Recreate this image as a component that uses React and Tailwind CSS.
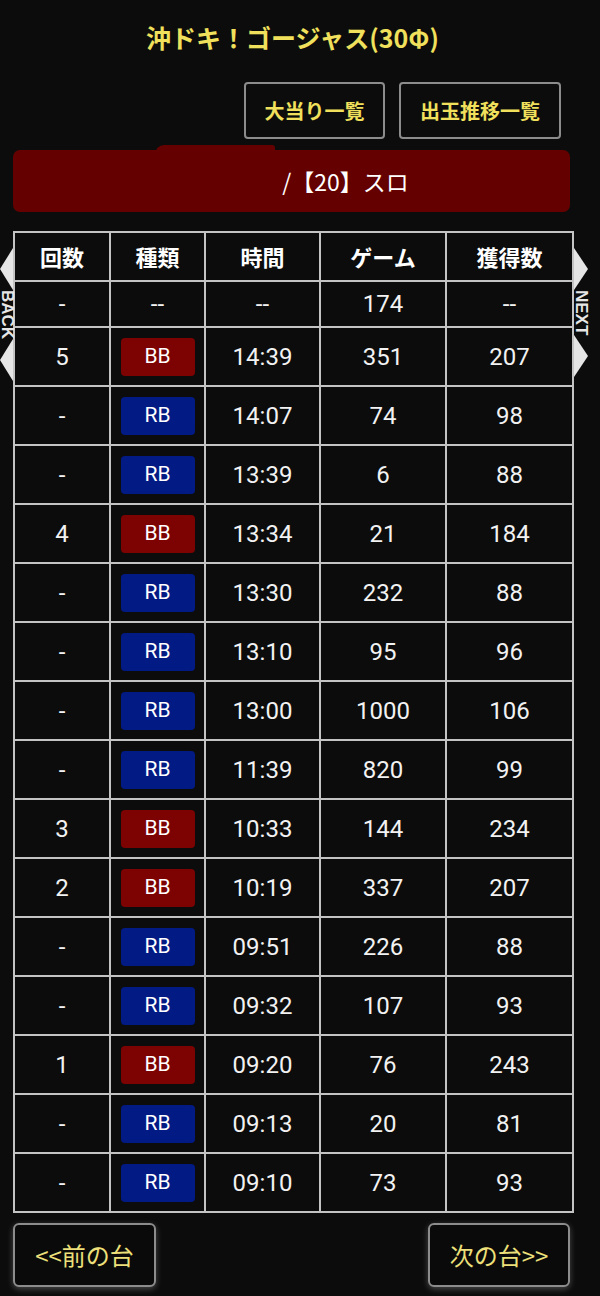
import React from "react"

const rows = [
  ["5", "BB", "14:39", "351", "207"],
  ["-", "RB", "14:07", "74", "98"],
  ["-", "RB", "13:39", "6", "88"],
  ["4", "BB", "13:34", "21", "184"],
  ["-", "RB", "13:30", "232", "88"],
  ["-", "RB", "13:10", "95", "96"],
  ["-", "RB", "13:00", "1000", "106"],
  ["-", "RB", "11:39", "820", "99"],
  ["3", "BB", "10:33", "144", "234"],
  ["2", "BB", "10:19", "337", "207"],
  ["-", "RB", "09:51", "226", "88"],
  ["-", "RB", "09:32", "107", "93"],
  ["1", "BB", "09:20", "76", "243"],
  ["-", "RB", "09:13", "20", "81"],
  ["-", "RB", "09:10", "73", "93"],
]

function Badge({ kind }) {
  const bg = kind === "BB" ? "bg-[#7d0303]" : "bg-[#021a84]"
  return (
    <div className={`mx-auto flex h-[38px] w-[74px] items-center justify-center rounded-[4px] text-[21px] text-white ${bg}`}>
      {kind}
    </div>
  )
}

function SideNav({ side }) {
  const left = side === "left"
  const tri = left ? "13,0 13,42 0,21" : "0,0 0,42 14,21"
  return (
    <div className={`absolute top-[248px] flex w-[14px] flex-col items-center ${left ? "left-0" : "left-[574px]"}`}>
      <svg width="14" height="42" viewBox="0 0 14 42">
        <polygon points={tri} fill="#e6e6e6" />
      </svg>
      <div className="my-[4px] font-['Liberation_Sans',sans-serif] text-[17px] font-bold leading-[14px] text-[#e6e6e6] [writing-mode:vertical-rl]">
        {left ? "BACK" : "NEXT"}
      </div>
      <svg width="14" height="42" viewBox="0 0 14 42">
        <polygon points={tri} fill="#e6e6e6" />
      </svg>
    </div>
  )
}

export default function App() {
  return (
    <div className="relative min-h-[1296px] w-[600px] bg-[#0c0c0c] font-['Roboto','Noto_Sans_CJK_JP',sans-serif] text-white">
      <SideNav side="left" />
      <SideNav side="right" />
      <div className="pl-[13px] pr-[28px]">
        <h1 className="pt-[22px] text-center font-['Noto_Sans_CJK_JP',sans-serif] text-[25px] font-bold leading-[30px] text-[#f0e05c]">
          沖ドキ！ゴージャス(30Φ)
        </h1>
        <div className="mt-[30px] flex justify-end gap-[14px] pr-[11px]">
          <button className="h-[57px] w-[141px] rounded-[4px] border-2 border-[#8c8c8c] font-['Noto_Sans_CJK_JP',sans-serif] text-[20px] font-bold text-[#f0e05c]">
            大当り一覧
          </button>
          <button className="h-[57px] w-[162px] rounded-[4px] border-2 border-[#8c8c8c] font-['Noto_Sans_CJK_JP',sans-serif] text-[20px] font-bold text-[#f0e05c]">
            出玉推移一覧
          </button>
        </div>
        <div className="relative mr-[2px] mt-[11px] flex h-[62px] items-center justify-center rounded-[7px] bg-[#650000] text-[23px]">
          <div className="absolute left-[142px] top-[-5px] h-[9px] w-[120px] rounded-tl-[12px] rounded-tr-[4px] bg-[#650000]" />
          <span className="w-[108px]" />
          <span className="font-['Noto_Sans_CJK_JP',sans-serif]">/【20】スロ</span>
        </div>
        <table className="mt-[19px] w-[559px] table-fixed border-collapse text-center">
          <colgroup>
            <col className="w-[96px]" />
            <col className="w-[95px]" />
            <col className="w-[115px]" />
            <col className="w-[126px]" />
            <col className="w-[127px]" />
          </colgroup>
          <thead>
            <tr className="h-[49px]">
              {["回数", "種類", "時間", "ゲーム", "獲得数"].map((h) => (
                <th key={h} className="border-2 border-[#c4c4c4] font-['Noto_Sans_CJK_JP',sans-serif] text-[22px] font-bold">
                  {h}
                </th>
              ))}
            </tr>
          </thead>
          <tbody className="text-[24px] text-[#f2f2f2]">
            <tr className="h-[46px]">
              {["-", "--", "--", "174", "--"].map((c, i) => (
                <td key={i} className="border-2 border-[#c4c4c4]">{c}</td>
              ))}
            </tr>
            {rows.map((r, i) => (
              <tr key={i} className="h-[59px]">
                <td className="border-2 border-[#c4c4c4]">{r[0]}</td>
                <td className="border-2 border-[#c4c4c4]">
                  <Badge kind={r[1]} />
                </td>
                <td className="border-2 border-[#c4c4c4]">{r[2]}</td>
                <td className="border-2 border-[#c4c4c4]">{r[3]}</td>
                <td className="border-2 border-[#c4c4c4]">{r[4]}</td>
              </tr>
            ))}
          </tbody>
        </table>
        <div className="mt-[10px] flex justify-between pr-[2px]">
          <button className="h-[64px] w-[143px] rounded-[6px] border-2 border-[#8c8c8c] bg-[#0a0a0a] font-['Noto_Sans_CJK_JP',sans-serif] text-[24px] text-[#ede07a] shadow-[0_2px_6px_rgba(255,255,255,0.25)]">
            &lt;&lt;前の台
          </button>
          <button className="h-[64px] w-[142px] rounded-[6px] border-2 border-[#8c8c8c] bg-[#0a0a0a] font-['Noto_Sans_CJK_JP',sans-serif] text-[24px] text-[#ede07a] shadow-[0_2px_6px_rgba(255,255,255,0.25)]">
            次の台&gt;&gt;
          </button>
        </div>
      </div>
    </div>
  )
}
